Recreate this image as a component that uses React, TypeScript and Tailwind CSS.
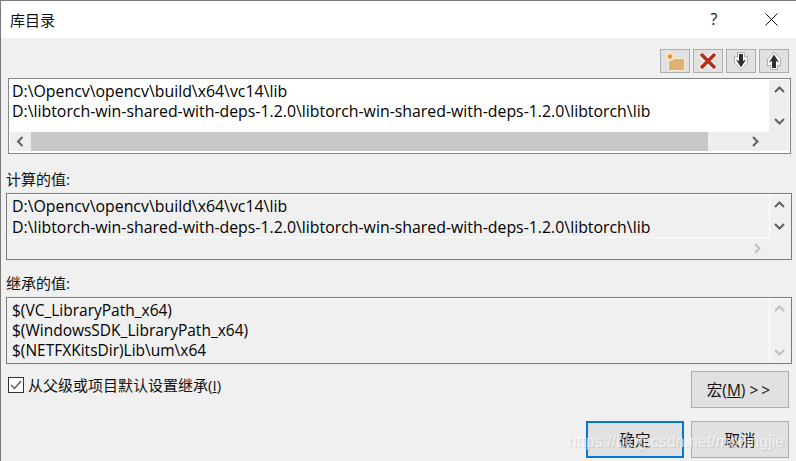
const lib1 = "D:\\Opencv\\opencv\\build\\x64\\vc14\\lib";
const lib2 = "D:\\libtorch-win-shared-with-deps-1.2.0\\libtorch-win-shared-with-deps-1.2.0\\libtorch\\lib";

function Chevron({ dir, color }: { dir: "up" | "down" | "left" | "right"; color: string }) {
  const paths = {
    up: "M1 7 L5.5 2.5 L10 7",
    down: "M1 3 L5.5 7.5 L10 3",
    left: "M7.5 1 L3 5.5 L7.5 10",
    right: "M3 1 L7.5 5.5 L3 10",
  };
  return (
    <svg width="11" height="11" viewBox="0 0 11 11" fill="none" stroke={color} strokeWidth="2">
      <path d={paths[dir]} />
    </svg>
  );
}

function VScroll({ color, bg, extra }: { color: string; bg: string; extra?: boolean }) {
  return (
    <div
      className={`shrink-0 flex flex-col items-center justify-between py-[5px] ${bg} ${
        extra ? "w-[19px] mr-[2px]" : "w-[20px]"
      }`}
    >
      <Chevron dir="up" color={color} />
      <Chevron dir="down" color={color} />
    </div>
  );
}

function ToolButton({ children }: { children: React.ReactNode }) {
  return (
    <div className="w-[30px] h-[24px] border border-[#adadad] bg-[#e1e1e1] flex items-center justify-center">
      {children}
    </div>
  );
}

function Button({ label, primary }: { label: React.ReactNode; primary?: boolean }) {
  return (
    <div
      className={`w-[98px] h-[37px] bg-[#e1e1e1] flex items-center justify-center text-[15.5px] text-[#111] ${
        primary ? "border-2 border-[#0078d7]" : "border border-[#adadad]"
      }`}
    >
      {label}
    </div>
  );
}

export default function App() {
  return (
    <div
      className="relative w-[796px] h-[461px] overflow-hidden bg-[#f0f0f0] border-t border-l border-[#7a7a7a] text-[15px] leading-[20px] text-[#111]"
      style={{ fontFamily: '"Open Sans", "Noto Sans CJK SC", sans-serif' }}
    >
      {/* title bar */}
      <div className="h-[37px] bg-white flex items-center pl-[9px] pr-[18px]">
        <span className="flex-1 text-[15px]">库目录</span>
        <span className="w-[20px] text-center text-[16px] mr-[41px] mb-[2px]">?</span>
        <svg width="13" height="13" viewBox="0 0 13 13" stroke="#111" strokeWidth="1">
          <path d="M0.5 0.5 L12.5 12.5 M12.5 0.5 L0.5 12.5" />
        </svg>
      </div>

      {/* toolbar */}
      <div className="flex justify-end gap-[3px] pt-[11px] pr-[7px]">
        <ToolButton>
          <svg width="22" height="20" viewBox="0 0 22 20">
            <path d="M4.5 7.5 H20.5 V19.5 H4.5 Z" fill="#deb275" stroke="#f6ecd8" />
            <circle cx="6" cy="5.5" r="4" fill="#f7d7a5" stroke="#fbf3e4" />
            <circle cx="6" cy="5.5" r="2" fill="#e08a2a" />
          </svg>
        </ToolButton>
        <ToolButton>
          <svg width="22" height="20" viewBox="0 0 22 20">
            <path d="M3 3 L19 18 M19 2 L3 18" stroke="#f8f0ee" strokeWidth="6.5" />
            <path d="M4 3 L18 17 M18 3 L4 17" stroke="#b5301c" strokeWidth="3.5" />
          </svg>
        </ToolButton>
        <ToolButton>
          <svg width="18" height="20" viewBox="0 0 18 20">
            <path d="M5.5 1.5 H12.5 V6 L15.5 5 V12 L9 19 L2.5 12 V5 L5.5 6 Z" fill="#fafafa" stroke="#b0b0b0" strokeWidth="1" />
            <path d="M7 3 H11 V10 L14 8.5 L9 16.5 L4 8.5 L7 10 Z" fill="#2e2e2e" />
          </svg>
        </ToolButton>
        <ToolButton>
          <svg width="18" height="20" viewBox="0 0 18 20">
            <path d="M5.5 18.5 V14 L2.5 15 V8 L9 1 L15.5 8 V15 L12.5 14 V18.5 Z" fill="#fafafa" stroke="#b0b0b0" strokeWidth="1" />
            <path d="M7 17 V10 L4 11.5 L9 3.5 L14 11.5 L11 10 V17 Z" fill="#2e2e2e" />
          </svg>
        </ToolButton>
      </div>

      {/* editable list */}
      <div className="ml-[7px] mr-[5px] mt-[5px] h-[76px] border border-[#82878a] bg-white flex flex-col p-px">
        <div className="flex h-[52px]">
          <div className="flex-1 pl-[2px] pt-px text-black whitespace-nowrap text-[15.87px]">
            <div>{lib1}</div>
            <div>{lib2}</div>
          </div>
          <VScroll color="#606060" bg="bg-[#eeeeee]" />
        </div>
        <div className="flex h-[19px] bg-[#eeeeee]">
          <div className="w-[21px] flex items-center justify-center">
            <Chevron dir="left" color="#606060" />
          </div>
          <div className="w-[677px] bg-[#c8c8c8]" />
          <div className="flex-1 flex items-center justify-end pr-[28px]">
            <Chevron dir="right" color="#606060" />
          </div>
        </div>
      </div>

      <div className="ml-[5px] mt-[15px] h-[20px]">计算的值:</div>

      {/* computed values */}
      <div className="ml-[5px] mr-[4px] mt-[4px] h-[67px] border border-[#7a7a7a] flex flex-col bg-[#f0f0f0]">
        <div className="h-px bg-white" />
        <div className="flex flex-1">
          <div className="flex-1 flex flex-col">
            <div className="h-[43px] pl-[5px] pt-px leading-[21px] whitespace-nowrap text-black overflow-hidden border-b border-r border-white text-[15.87px]">
              <div>{lib1}</div>
              <div>{lib2}</div>
            </div>
            <div className="flex-1 flex items-center justify-end pr-[7px]">
              <Chevron dir="right" color="#c0c0c0" />
            </div>
          </div>
          <div className="h-[42px] flex">
            <VScroll color="#606060" bg="bg-[#f0f0f0]" extra />
          </div>
        </div>
      </div>

      <div className="ml-[5px] mt-[13px] h-[20px]">继承的值:</div>

      {/* inherited values */}
      <div className="ml-[5px] mr-[4px] mt-[4px] h-[67px] border border-[#7a7a7a] flex flex-col bg-[#f0f0f0]">
        <div className="h-px bg-white" />
        <div className="flex flex-1">
          <div className="flex-1 pl-[5px] pt-px whitespace-nowrap text-black text-[15.5px]">
            <div>$(VC_LibraryPath_x64)</div>
            <div>$(WindowsSDK_LibraryPath_x64)</div>
            <div>$(NETFXKitsDir)Lib\um\x64</div>
          </div>
          <div className="border-l border-white flex">
            <VScroll color="#c0c0c0" bg="bg-[#f0f0f0]" extra />
          </div>
        </div>
      </div>

      {/* bottom rows */}
      <div className="flex justify-between mt-[7px] pl-[7px] pr-[7px]">
        <div className="flex items-center gap-[4px] h-[23px] mt-[2px]">
          <div className="w-[16px] h-[16px] border border-[#333] bg-white flex items-center justify-center">
            <svg width="12" height="10" viewBox="0 0 12 10" fill="none" stroke="#555" strokeWidth="1.3">
              <path d="M1 5 L4.5 8.5 L11 1" />
            </svg>
          </div>
          <span>
            从父级或项目默认设置继承(<span className="underline">I</span>)
          </span>
        </div>
        <Button
          label={
            <span>
              宏(<span className="underline">M</span>) <span className="tracking-[3px]">&gt;&gt;</span>
            </span>
          }
        />
      </div>
      <div className="flex justify-end gap-[7px] mt-[13px] pr-[7px]">
        <Button label="确定" primary />
        <Button label="取消" />
      </div>

      {/* watermark */}
      <div
        className="absolute left-[567px] top-[431px] text-[16px] leading-[20px] text-white/70 whitespace-nowrap [text-shadow:1px_1px_1px_rgba(0,0,0,0.12)]"
        style={{ fontFamily: '"Liberation Sans", sans-serif' }}
      >
        https://blog.csdn.net/mooingjie
      </div>
    </div>
  );
}
